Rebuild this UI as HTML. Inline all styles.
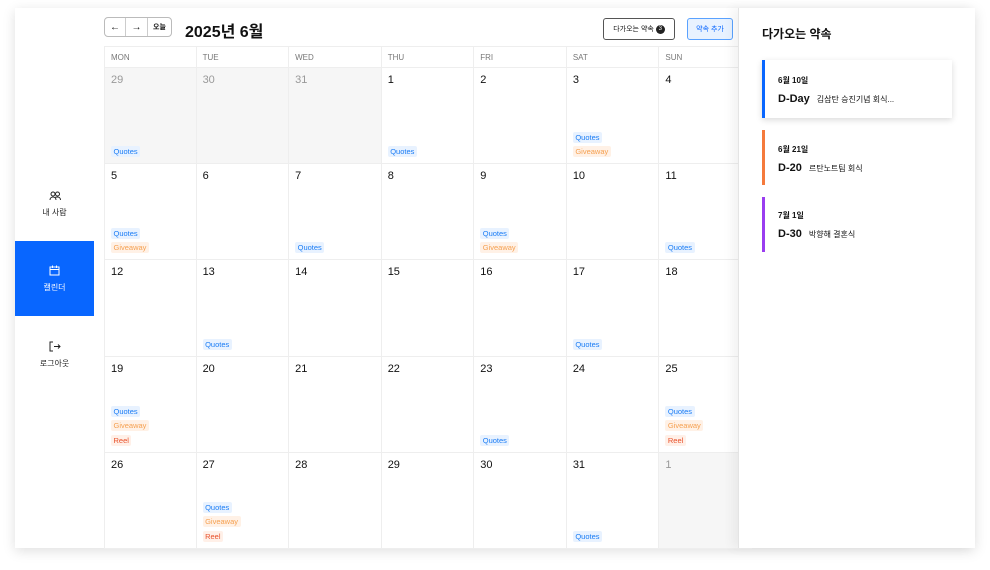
<!DOCTYPE html>
<html><head><meta charset="utf-8"><style>
*{box-sizing:border-box;margin:0;padding:0}
body{width:990px;height:570px;background:#fff;font-family:"Liberation Sans","Noto Sans CJK KR",sans-serif;position:relative;overflow:hidden;color:#111}
.card{position:absolute;left:15px;top:8px;width:960px;height:540px;background:#fff;box-shadow:0 3px 12px rgba(0,0,0,.13)}
.side{position:absolute;left:15px;top:8px;width:79px;height:540px;background:#fff}
.si{position:absolute;left:0;width:79px;text-align:center;font-size:8px;color:#222}
.si svg{display:block;margin:0 auto 6px}
.active{background:#0866ff;color:#fff;top:233px;height:75px;padding-top:24px}
.cal{position:absolute;left:104px;top:46px;width:648px;height:502px;display:grid;grid-template-columns:repeat(7,92.57px);grid-template-rows:21px repeat(5,96.2px);border-top:1px solid #eee}
.h{font-size:8px;color:#777;padding:6px 0 0 6px;border-right:1px solid #eee;border-bottom:1px solid #eee}
.c{position:relative;border-right:1px solid #eee;border-bottom:1px solid #eee;padding:6px 0 0 6px;font-size:11px}
.c:nth-child(7n+1){border-left:1px solid #eee}
.h:first-child{border-left:1px solid #eee}
.o{background:#f6f6f6;color:#999}
.chips{position:absolute;left:6px;bottom:6px;display:flex;flex-direction:column;align-items:flex-start;gap:3.5px}
.q,.g,.r{font-size:7.5px;line-height:11px;height:11px;padding:0 2.5px;border-radius:2px}
.q{background:#e8f2ff;color:#1a7cf5}
.g{background:#fff1e6;color:#f5a050}
.r{background:#fff0e8;color:#e8502a}
.panel{position:absolute;left:738px;top:8px;width:237px;height:540px;background:#fff;border-left:1px solid #e4e4e4;box-shadow:-6px 0 10px rgba(0,0,0,.05)}
.ev{position:absolute;left:23px;width:190px;padding-left:13px}
.ev .d{font-size:8px;font-weight:bold}
.ev .t{font-size:11px;font-weight:bold;margin-top:7px}
.ev .t span{font-size:8px;font-weight:normal;margin-left:7px}
.btn{position:absolute;font-size:7px;border-radius:3px;display:flex;align-items:center;justify-content:center}
</style></head><body>
<div class="card"></div>
<div class="side">
 <div class="si" style="top:183px"><svg width="12" height="10" viewBox="0 0 12 10" fill="none" stroke="#222" stroke-width="1"><circle cx="4" cy="3" r="2"/><circle cx="8.5" cy="3" r="2"/><path d="M1 9c0-2 1.5-3 3-3s3 1 3 3M6 6.5c.8-.4 1.7-.5 2.5-.5 1.5 0 3 1 3 3"/></svg>내 사람</div>
 <div class="si active"><svg width="11" height="11" viewBox="0 0 11 11" fill="none" stroke="#fff" stroke-width="1"><rect x="1" y="2" width="9" height="8"/><path d="M1 4.5h9M3.5 .5v2.5M7.5 .5v2.5"/></svg>캘린더</div>
 <div class="si" style="top:333px"><svg width="12" height="11" viewBox="0 0 12 11" fill="none" stroke="#222" stroke-width="1"><path d="M4 1H1v9h3M5 5.5h6M9 3.5l2 2-2 2"/></svg>로그아웃</div>
</div>
<div style="position:absolute;left:104px;top:17px;width:68px;height:20px;border:1px solid #bbb;border-radius:4px;display:flex;font-size:7px">
 <div style="width:21px;border-right:1px solid #ccc;display:flex;align-items:center;justify-content:center;font-size:10px">←</div>
 <div style="width:22px;border-right:1px solid #ccc;display:flex;align-items:center;justify-content:center;font-size:10px">→</div>
 <div style="flex:1;display:flex;align-items:center;justify-content:center;font-weight:bold">오늘</div>
</div>
<div style="position:absolute;left:185px;top:18px;font-size:16px;font-weight:bold">2025년 6월</div>
<div class="btn" style="left:603px;top:18px;width:72px;height:22px;border:1px solid #555">다가오는 약속&nbsp;<span style="display:inline-block;width:9px;height:9px;border-radius:50%;background:#222;color:#fff;font-size:6px;line-height:9px;text-align:center">3</span></div>
<div class="btn" style="left:687px;top:18px;width:46px;height:22px;border:1px solid #5aa2ff;background:#e8f2ff;color:#0866ff">약속 추가</div>
<div class="cal">
<div class="h">MON</div><div class="h">TUE</div><div class="h">WED</div><div class="h">THU</div><div class="h">FRI</div><div class="h">SAT</div><div class="h">SUN</div>
<div class="c o">29<div class="chips"><div class="q">Quotes</div></div></div><div class="c o">30</div><div class="c o">31</div>
<div class="c">1<div class="chips"><div class="q">Quotes</div></div></div><div class="c">2</div>
<div class="c">3<div class="chips"><div class="q">Quotes</div><div class="g">Giveaway</div></div></div><div class="c">4</div>
<div class="c">5<div class="chips"><div class="q">Quotes</div><div class="g">Giveaway</div></div></div><div class="c">6</div>
<div class="c">7<div class="chips"><div class="q">Quotes</div></div></div><div class="c">8</div>
<div class="c">9<div class="chips"><div class="q">Quotes</div><div class="g">Giveaway</div></div></div><div class="c">10</div>
<div class="c">11<div class="chips"><div class="q">Quotes</div></div></div>
<div class="c">12</div><div class="c">13<div class="chips"><div class="q">Quotes</div></div></div><div class="c">14</div><div class="c">15</div><div class="c">16</div>
<div class="c">17<div class="chips"><div class="q">Quotes</div></div></div><div class="c">18</div>
<div class="c">19<div class="chips"><div class="q">Quotes</div><div class="g">Giveaway</div><div class="r">Reel</div></div></div><div class="c">20</div><div class="c">21</div><div class="c">22</div>
<div class="c">23<div class="chips"><div class="q">Quotes</div></div></div><div class="c">24</div>
<div class="c">25<div class="chips"><div class="q">Quotes</div><div class="g">Giveaway</div><div class="r">Reel</div></div></div>
<div class="c">26</div><div class="c">27<div class="chips"><div class="q">Quotes</div><div class="g">Giveaway</div><div class="r">Reel</div></div></div><div class="c">28</div><div class="c">29</div><div class="c">30</div>
<div class="c">31<div class="chips"><div class="q">Quotes</div></div></div><div class="c o">1</div>
</div>
<div class="panel">
 <div style="position:absolute;left:23px;top:17px;font-size:12px;font-weight:bold">다가오는 약속</div>
 <div class="ev" style="top:52px;height:58px;padding-top:15px;border-left:3px solid #0866ff;box-shadow:0 2px 6px rgba(0,0,0,.15);background:#fff"><div class="d">6월 10일</div><div class="t">D-Day<span>김삼탄 승진기념 회식...</span></div></div>
 <div class="ev" style="top:122px;height:55px;padding-top:14px;border-left:3px solid #f57a3c"><div class="d">6월 21일</div><div class="t">D-20<span>르탄노트팀 회식</span></div></div>
 <div class="ev" style="top:189px;height:55px;padding-top:13px;border-left:3px solid #9a3df0"><div class="d">7월 1일</div><div class="t">D-30<span>박향해 결혼식</span></div></div>
</div>
</body></html>
